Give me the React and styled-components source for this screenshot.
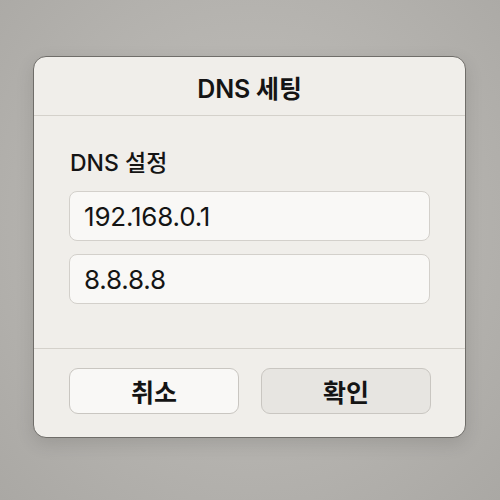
import React from "react";
import styled, { createGlobalStyle } from "styled-components";

const Global = createGlobalStyle`
  html, body { margin: 0; padding: 0; }
  body {
    width: 500px; height: 500px;
    background: radial-gradient(ellipse at 50% 45%, #c2c0bc 0%, #b4b2ae 60%, #aaa8a4 100%);
    font-family: Inter, "Noto Sans CJK KR", sans-serif;
    color: #141414;
  }
`;

const Page = styled.div`
  box-sizing: border-box;
  width: 500px;
  height: 500px;
  padding: 56px 34px 0 33px;
`;

const Dialog = styled.div`
  box-sizing: border-box;
  width: 433px;
  height: 382px;
  background: #f0eeea;
  border: 1px solid #6f6d69;
  border-radius: 13px;
  display: flex;
  flex-direction: column;
  box-shadow: 0 6px 18px rgba(0,0,0,0.12);
  overflow: hidden;
`;

const Header = styled.div`
  height: 59px;
  display: flex;
  align-items: center;
  justify-content: center;
  border-bottom: 1.5px solid #d4d1cb;
  font-size: 25px;
  font-weight: 600;
  letter-spacing: -0.2px;
  padding-top: 2px;
  box-sizing: border-box;
`;

const Body = styled.div`
  flex: 1;
  display: flex;
  flex-direction: column;
  padding: 32px 35px 0 35px;
  border-bottom: 1.5px solid #d4d1cb;
`;

const Label = styled.div`
  font-size: 23px;
  line-height: 30px;
  font-weight: 550;
  margin-bottom: 13px;
  padding-left: 1px;
`;

const Field = styled.div`
  box-sizing: border-box;
  height: 50px;
  border: 1px solid #d3d0cb;
  border-radius: 8px;
  background: #f9f8f6;
  display: flex;
  align-items: center;
  padding-left: 14px;
  font-size: 26px;
  font-weight: 400;
  letter-spacing: -0.2px;
  margin-bottom: ${p => p.$gap || 0}px;
`;

const Footer = styled.div`
  height: 88px;
  box-sizing: border-box;
  padding: 19px 35px 0 35px;
  display: grid;
  grid-template-columns: 170px 170px;
  column-gap: 22px;
  align-items: start;
`;

const Button = styled.div`
  box-sizing: border-box;
  height: 46px;
  border: 1px solid #c9c6c1;
  border-radius: 9px;
  background: ${p => (p.$primary ? "#e7e5e1" : "#f9f8f6")};
  display: flex;
  align-items: center;
  justify-content: center;
  font-size: 25px;
  font-weight: 700;
`;

export default function App() {
  return (
    <>
      <Global />
      <Page>
        <Dialog>
          <Header>DNS 세팅</Header>
          <Body>
            <Label>DNS 설정</Label>
            <Field $gap={13}>192.168.0.1</Field>
            <Field>8.8.8.8</Field>
          </Body>
          <Footer>
            <Button>취소</Button>
            <Button $primary>확인</Button>
          </Footer>
        </Dialog>
      </Page>
    </>
  );
}
